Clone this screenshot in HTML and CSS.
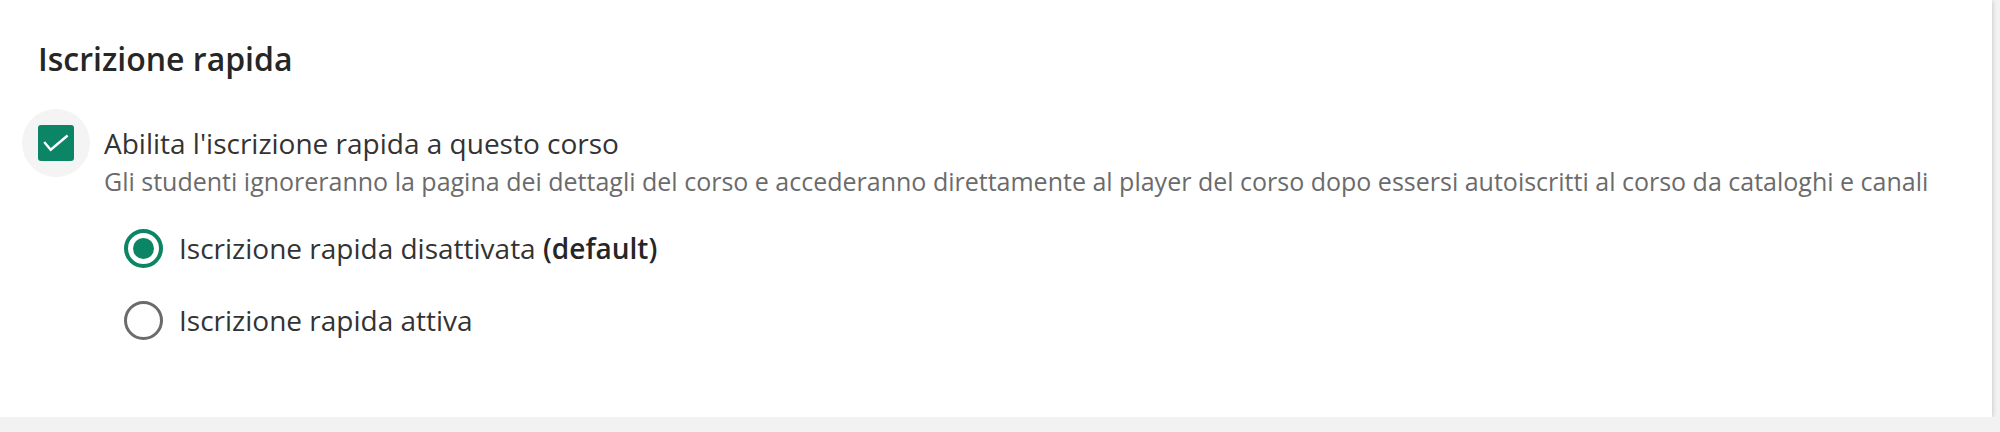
FILE: index.html
```html
<!DOCTYPE html>
<html lang="it">
<head>
  <meta charset="UTF-8" />
  <meta name="viewport" content="width=device-width, initial-scale=1.0"/>
  <title>Iscrizione rapida</title>
  <link rel="stylesheet" href="styles.css">
</head>
<body>
  <section class="card">
    <h2>Iscrizione rapida</h2>

    <div class="option">
      <span class="checkbox checked">
        <svg viewBox="0 0 36 36" width="36" height="36">
          <polyline points="7,18 12.7,24.7 28.7,11.3" fill="none" stroke="#fff" stroke-width="2.4" stroke-linecap="square"/>
        </svg>
      </span>
      <div class="option-text">
        <div class="label">Abilita l'iscrizione rapida a questo corso</div>
        <div class="hint">Gli studenti ignoreranno la pagina dei dettagli del corso e accederanno direttamente al player del corso dopo essersi autoiscritti al corso da cataloghi e canali</div>

        <div class="radios">
          <label class="radio-row">
            <span class="radio selected"></span>
            <span>Iscrizione rapida disattivata <b>(default)</b></span>
          </label>
          <label class="radio-row">
            <span class="radio"></span>
            <span>Iscrizione rapida attiva</span>
          </label>
        </div>
      </div>
    </div>
  </section>
</body>
</html>
```

FILE: styles.css
```css
* {
  box-sizing: border-box;
}

body {
  margin: 0;
  font-family: "Open Sans", "Noto Sans", sans-serif;
  background-color: #f2f2f2;
  color: #333;
}

.card {
  background: #fff;
  width: 1992px;
  padding: 39px 38px 77px;
  box-shadow: 0 1px 5px rgba(0, 0, 0, 0.22);
  isolation: isolate;
}

.card h2 {
  margin: 0;
  font-size: 32px;
  line-height: 40px;
  font-weight: 600;
  color: #262626;
}

.option {
  display: flex;
  gap: 30px;
  margin-top: 44px;
}

.checkbox {
  position: relative;
  flex: none;
  width: 36px;
  height: 36px;
  margin-top: 2px;
  border-radius: 3px;
  background: #0b8566;
}

/* light halo behind the focused checkbox */
.checkbox::before {
  content: "";
  position: absolute;
  left: -16px;
  top: -16px;
  width: 68px;
  height: 68px;
  border-radius: 50%;
  background: #f4f4f4;
  z-index: -1;
}

.checkbox svg {
  display: block;
}

.option-text .label {
  font-size: 28px;
  line-height: 40px;
  color: #333;
}

.option-text .hint {
  font-size: 25px;
  line-height: 36px;
  color: #6b6b6b;
}

.radios {
  display: flex;
  flex-direction: column;
  gap: 32px;
  margin: 29px 0 0 20px;
}

.radio-row {
  display: flex;
  align-items: center;
  gap: 16px;
  font-size: 28px;
  line-height: 40px;
  color: #333;
}

.radio-row b {
  font-weight: 600;
  color: #262626;
}

.radio {
  flex: none;
  width: 39px;
  height: 39px;
  border-radius: 50%;
  border: 3px solid #6b6b6b;
  display: flex;
  align-items: center;
  justify-content: center;
}

.radio.selected {
  border: 4px solid #0b8566;
}

.radio.selected::after {
  content: "";
  width: 21px;
  height: 21px;
  border-radius: 50%;
  background: #0b8566;
}
```
